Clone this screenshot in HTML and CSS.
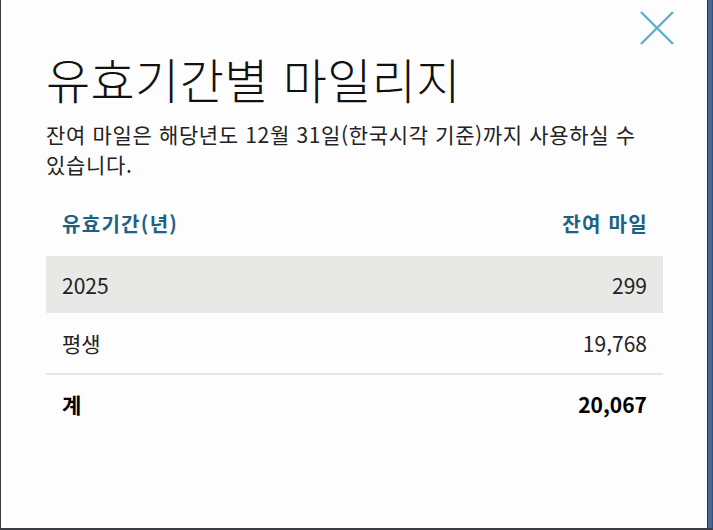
FILE: index.html
```html
<!DOCTYPE html>
<html lang="ko">
<head>
<meta charset="utf-8">
<title>유효기간별 마일리지</title>
<link rel="stylesheet" href="styles.css">
</head>
<body>
<div class="frame">
  <div class="dialog">
    <button class="close" aria-label="닫기">
      <svg width="36" height="36" viewBox="0 0 36 36"><path d="M2 2 L34 34 M34 2 L2 34" stroke="#5fb0c6" stroke-width="2.4" fill="none"/></svg>
    </button>
    <h1 class="title">유효기간별 마일리지</h1>
    <p class="desc">잔여 마일은 해당년도 12월 31일(한국시각 기준)까지 사용하실 수 있습니다.</p>
    <div class="table">
      <div class="row head"><span>유효기간(년)</span><span>잔여 마일</span></div>
      <div class="row shaded"><span>2025</span><span>299</span></div>
      <div class="row"><span>평생</span><span>19,768</span></div>
      <div class="row total"><span>계</span><span>20,067</span></div>
    </div>
  </div>
</div>
</body>
</html>
```
FILE: styles.css
```css
* { box-sizing: border-box; }
html, body { margin: 0; padding: 0; background: #fdfdfd; }
body { font-family: "Noto Sans CJK KR", "Noto Sans", sans-serif; word-break: keep-all; }
.frame {
  width: 713px;
  height: 530px;
  background: #4a6894;
  padding-right: 4px;
  border-right: 1px solid #33507a;
  border-bottom: 2px solid #3a3d44;
}
.dialog {
  position: relative;
  height: 100%;
  background: #fdfdfd;
  border-left: 1px solid #3a3a3a;
  border-right: 1px solid #2b3344;
  padding: 48px 44px 0 45px;
}
.close {
  position: absolute;
  top: 10px;
  right: 32px;
  width: 36px;
  height: 36px;
  padding: 0;
  border: 0;
  background: none;
}
.close svg { display: block; }
.title {
  margin: 0;
  font-size: 48px;
  font-weight: 300;
  line-height: 60px;
  color: #111;
  letter-spacing: 0.4px;
}
.desc {
  margin: 11px 0 0;
  font-size: 21px;
  line-height: 30px;
  color: #222;
  font-weight: 400;
  letter-spacing: 0.65px;
}
.table { margin-top: 27px; }
.row {
  display: flex;
  justify-content: space-between;
  align-items: center;
  padding: 0 16px;
  height: 58px;
  font-size: 21px;
  color: #222;
}
.row.head {
  height: 50px;
  font-size: 20px;
  line-height: 28px;
  color: #1d6284;
  font-weight: 700;
  letter-spacing: 1.3px;
  align-items: flex-start;
  padding-top: 4px;
  padding-right: 15px;
}
.row.shaded { background: #e8e8e6; height: 57px; }
.row:nth-child(3) { height: 62px; border-bottom: 2px solid #e6e6e6; }
.row.total { font-weight: 700; font-size: 21px; color: #000; height: 60px; padding-bottom: 2px; }
```
